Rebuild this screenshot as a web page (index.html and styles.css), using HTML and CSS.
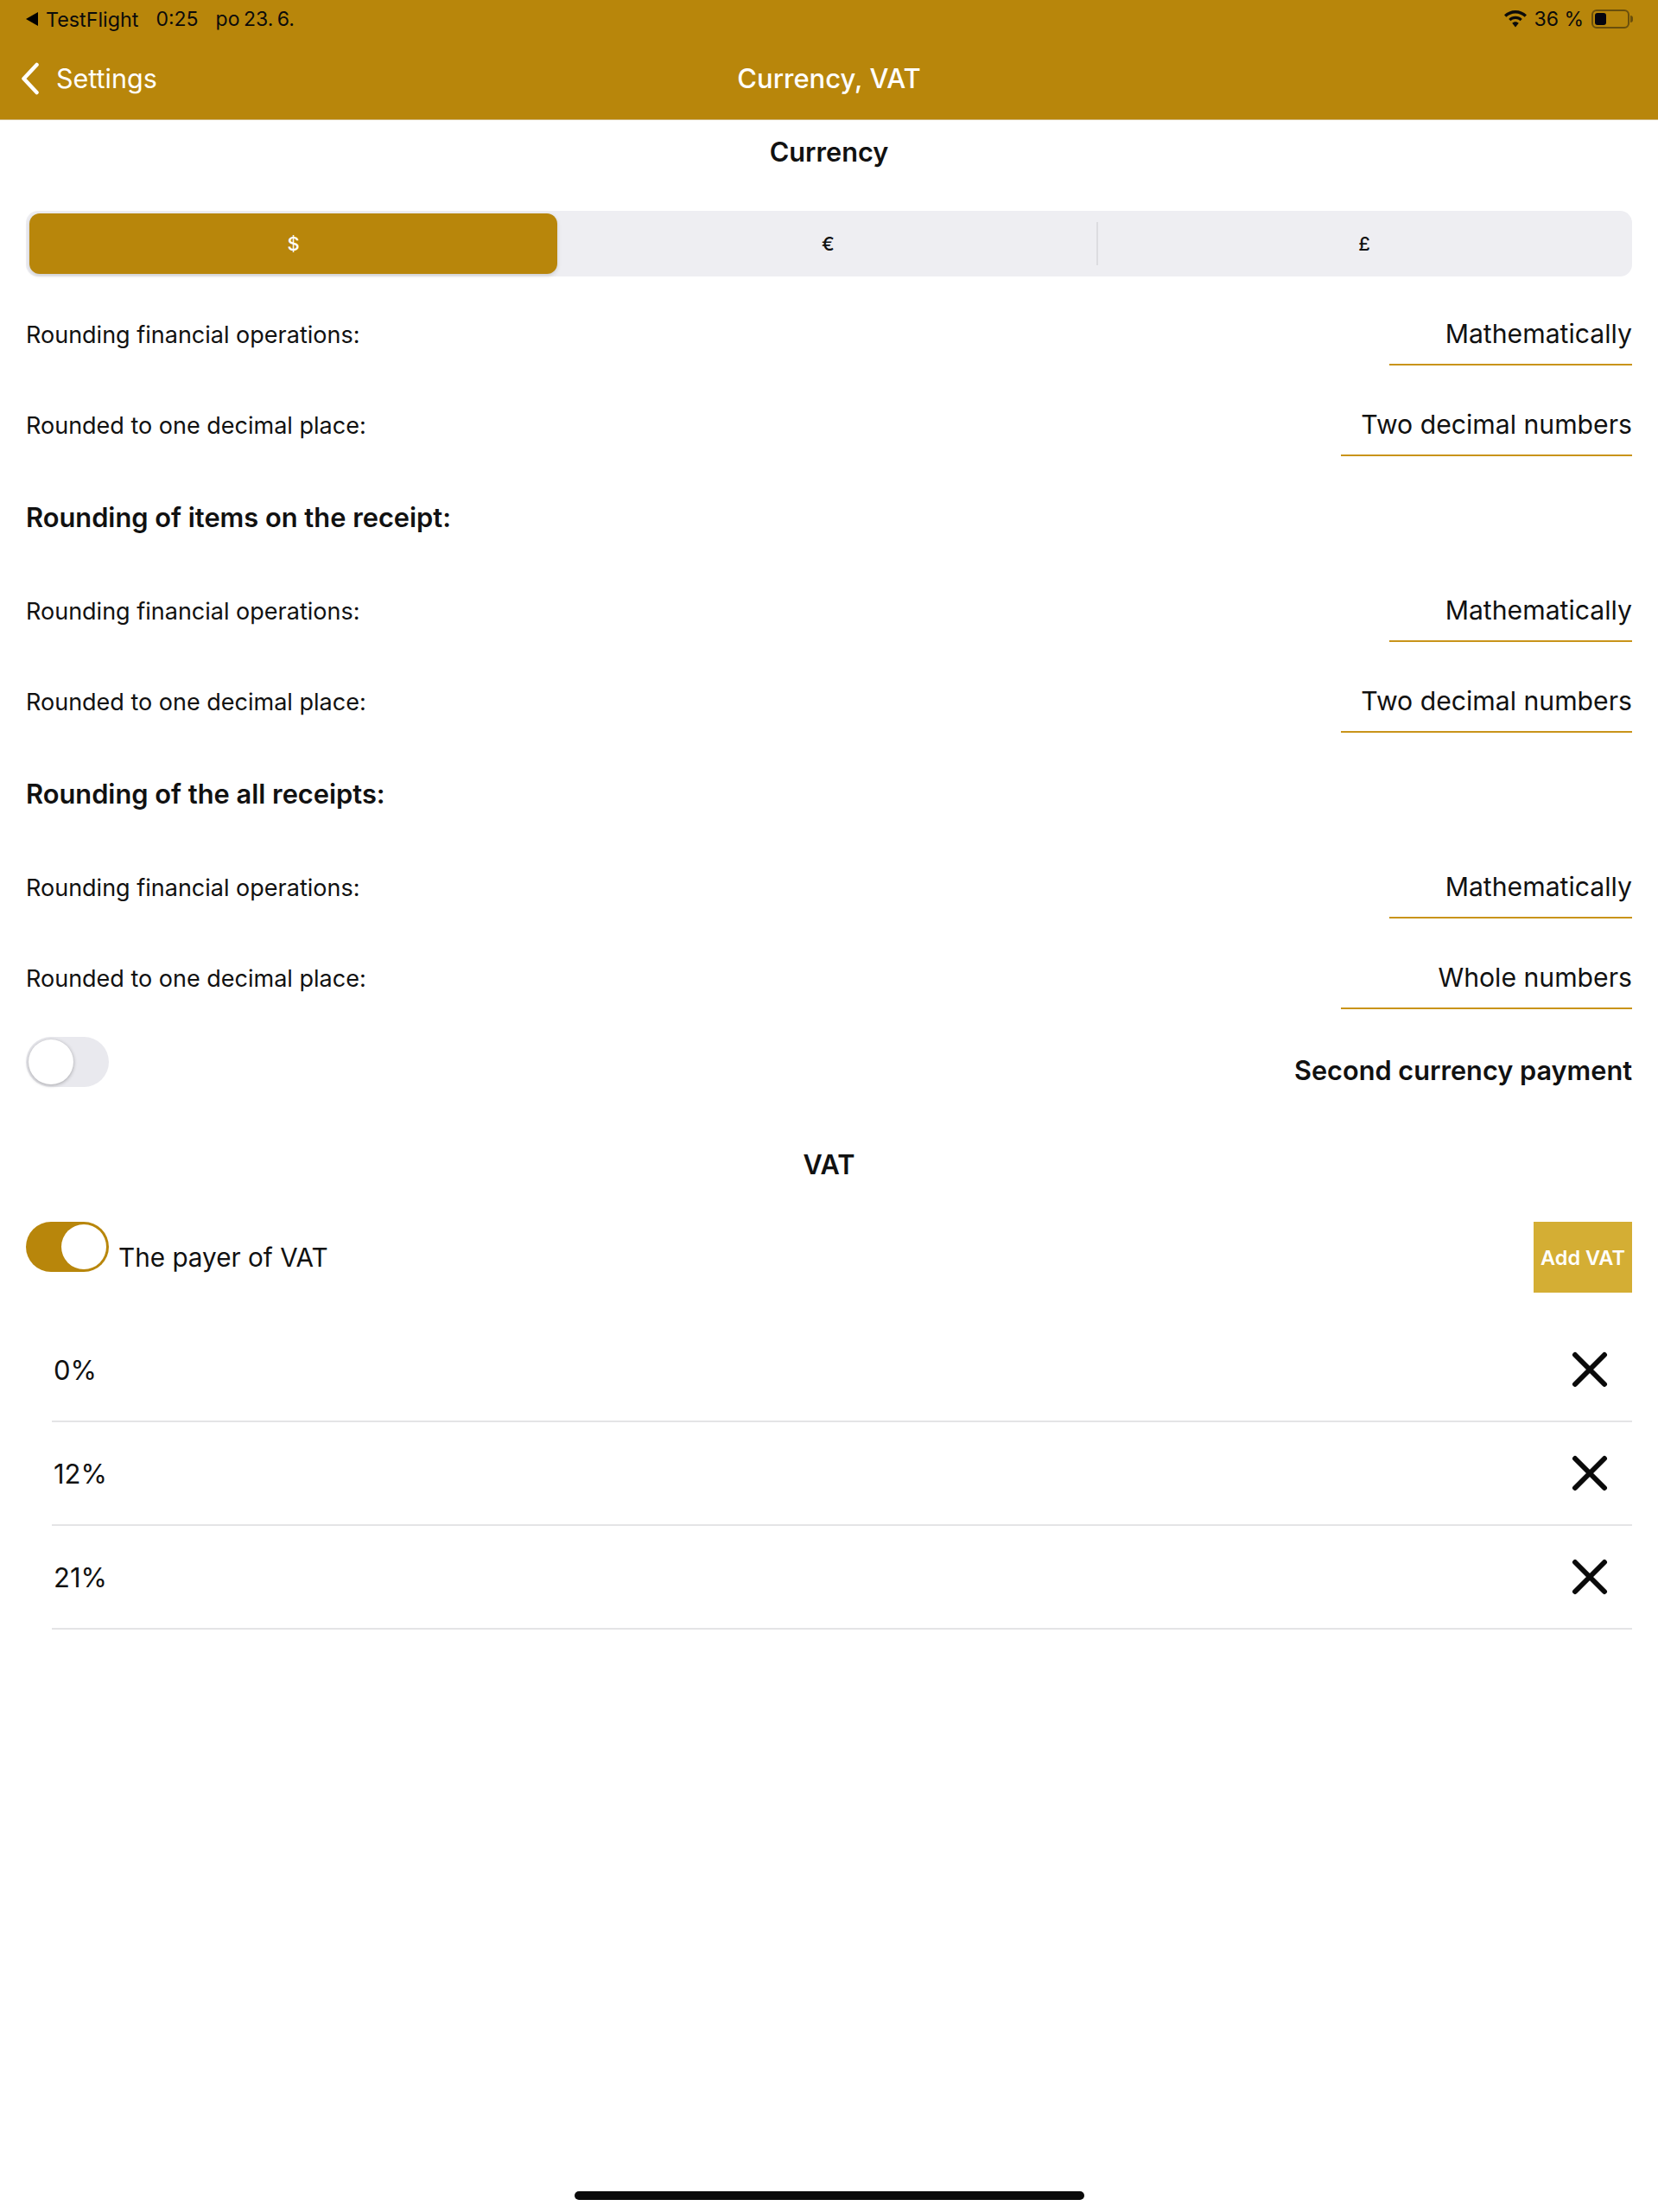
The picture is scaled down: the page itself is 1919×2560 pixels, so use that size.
FILE: index.html
```html
<!DOCTYPE html>
<html lang="en">
<head>
<meta charset="utf-8">
<title>Currency, VAT</title>
<link rel="stylesheet" href="styles.css">
</head>
<body>
<div class="page">
  <header class="appbar">
    <div class="status">
      <div class="status-left">
        <svg class="back-tri" viewBox="0 0 14 16" aria-hidden="true"><path d="M14 0V16L0 8Z"/></svg>
        <span class="st-app">TestFlight</span>
        <span class="st-time">0:25</span>
        <span class="st-date">po 23. 6.</span>
      </div>
      <div class="status-right">
        <svg class="wifi" viewBox="0 0 26 20" aria-hidden="true"><path d="M13 0C8 0 3.500 2 0 5.300l2.300 2.400C5.100 5 8.900 3.400 13 3.400s7.900 1.600 10.700 4.300L26 5.300C22.500 2 18 0 13 0z"/><path d="M13 6.800c-3 0-5.700 1.200-7.800 3.100l2.300 2.400c1.500-1.400 3.400-2.200 5.500-2.200s4 .8 5.500 2.200l2.300-2.400c-2.100-1.900-4.800-3.100-7.800-3.100z"/><path d="M13 13.200c-1.500 0-2.800.6-3.800 1.500L13 19.500l3.800-4.800c-1-.9-2.300-1.500-3.800-1.500z"/></svg>
        <span class="st-batt">36 %</span>
        <div class="battery"><span class="battery-fill"></span></div>
        <span class="battery-cap"></span>
      </div>
    </div>
    <nav class="navbar">
      <a class="nav-back">
        <svg class="chevron" viewBox="0 0 22 38" aria-hidden="true"><path d="M18.500 3 3.500 19l15 16" fill="none" stroke="#fff" stroke-width="4.500" stroke-linecap="round" stroke-linejoin="round"/></svg>
        <span>Settings</span>
      </a>
      <h1 class="nav-title">Currency, VAT</h1>
    </nav>
  </header>

  <main class="content">
    <h2 class="section-title">Currency</h2>
    <div class="segmented">
      <div class="seg seg-on">$</div>
      <div class="seg seg-mid">€</div>
      <div class="seg seg-last">£</div>
    </div>

    <div class="row"><span class="label">Rounding financial operations:</span><span class="field field-s">Mathematically</span></div>
    <div class="row"><span class="label">Rounded to one decimal place:</span><span class="field">Two decimal numbers</span></div>
    <h3 class="sub">Rounding of items on the receipt:</h3>
    <div class="row"><span class="label">Rounding financial operations:</span><span class="field field-s">Mathematically</span></div>
    <div class="row"><span class="label">Rounded to one decimal place:</span><span class="field">Two decimal numbers</span></div>
    <h3 class="sub">Rounding of the all receipts:</h3>
    <div class="row"><span class="label">Rounding financial operations:</span><span class="field field-s">Mathematically</span></div>
    <div class="row"><span class="label">Rounded to one decimal place:</span><span class="field">Whole numbers</span></div>

    <div class="second">
      <div class="toggle"><span class="knob"></span></div>
      <strong class="second-label">Second currency payment</strong>
    </div>

    <h2 class="section-title vat-title">VAT</h2>

    <div class="payer">
      <div class="toggle toggle-on"><span class="knob"></span></div>
      <span class="payer-label">The payer of VAT</span>
      <button class="add">Add VAT</button>
    </div>

    <ul class="vat-list">
      <li class="vat-item"><span>0%</span><svg class="x" viewBox="0 0 42 42" aria-hidden="true"><path d="M4 4l34 34M38 4 4 38"/></svg></li>
      <li class="vat-item"><span>12%</span><svg class="x" viewBox="0 0 42 42" aria-hidden="true"><path d="M4 4l34 34M38 4 4 38"/></svg></li>
      <li class="vat-item"><span>21%</span><svg class="x" viewBox="0 0 42 42" aria-hidden="true"><path d="M4 4l34 34M38 4 4 38"/></svg></li>
    </ul>
  </main>
  <div class="home"></div>
</div>
</body>
</html>
```
FILE: styles.css
```css
* { box-sizing: border-box; }
html, body { margin: 0; padding: 0; background: #fff; }
body { font-family: Inter, "Liberation Sans", sans-serif; color: #111; }
.page { width: 1919px; height: 2560px; display: flex; flex-direction: column; overflow: hidden; }

.appbar { height: 139px; background: #b8860b; border-bottom: 1px solid #d0b880; flex: none; }
.status { height: 44px; display: flex; justify-content: space-between; align-items: center; padding: 0 29px 0 30px; font-size: 23px; color: #0b0b0b; }
.status-left { display: flex; align-items: center; }
.back-tri { width: 14px; height: 16px; fill: #000; margin-right: 9px; }
.st-app { font-size: 23.300px; }
.st-time { margin-left: 20px; margin-right: 20px; }
.st-date { font-size: 23px; word-spacing: -2px; }
.status-right { display: flex; align-items: center; }
.wifi { width: 26px; height: 20px; fill: #0b0b0b; margin-right: 8px; }
.battery { width: 44px; height: 22px; margin-left: 9px; border: 2px solid #6a4f0c; border-radius: 6px; padding: 2px; display: flex; }
.battery-fill { width: 13px; background: #05050f; border-radius: 3px; }
.battery-cap { width: 3px; height: 8px; background: #6a4f0c; border-radius: 0 3px 3px 0; margin-left: 1px; }
.navbar { height: 94px; position: relative; display: flex; align-items: center; justify-content: center; padding-bottom: 1px; color: #fff; }
.nav-back { position: absolute; left: 24px; top: 0; height: 93px; display: flex; align-items: center; gap: 19px; font-size: 30.500px; }
.chevron { width: 22px; height: 38px; }
.nav-title { margin: 0; font-size: 31px; font-weight: 500; }

.content { padding: 0 30px; flex: 1; }
.section-title { margin: 0; height: 74px; line-height: 74px; text-align: center; font-size: 30.700px; font-weight: 600; }
.segmented { margin-top: 31px; height: 76px; background: #eeeef2; border-radius: 14px; display: grid; grid-template-columns: 611px 624px 1fr; padding: 3px 0 3px 4px; font-size: 22px; font-weight: 500; }
.seg { display: flex; align-items: center; justify-content: center; position: relative; border-radius: 12px; }
.seg-on { background: #b8860b; color: #fff; box-shadow: 0 2px 5px rgba(0,0,0,.14); }
.seg-mid { padding-left: 3px; }
.seg-last::before { content: ""; position: absolute; left: 0; top: 10px; bottom: 10px; width: 2px; background: #dcdce0; }

.row { height: 105px; display: flex; justify-content: space-between; align-items: flex-end; padding-bottom: 2px; }
.label { height: 72px; line-height: 73px; font-size: 27px; }
.field { width: 337px; height: 73px; line-height: 73px; font-size: 30.200px; text-align: right; border-bottom: 2px solid #c9941a; }
.field-s { width: 281px; }

.sub { margin: 0; height: 107px; padding-top: 33px; line-height: 72px; font-size: 30.800px; font-weight: 600; }
.sub + .row { height: 108px; }

.second { height: 108px; display: flex; justify-content: space-between; align-items: flex-start; padding-top: 30px; }
.second-label { font-size: 30.700px; font-weight: 600; line-height: 72px; margin-top: 3px; }
.toggle { width: 96px; height: 58px; border-radius: 29px; background: #e9e9ee; position: relative; flex: none; }
.knob { position: absolute; left: 3px; top: 3px; width: 52px; height: 52px; border-radius: 50%; background: #fff; box-shadow: 0 1px 4px rgba(0,0,0,.3); }
.toggle-on { background: #b8860b; }
.toggle-on .knob { left: 41px; box-shadow: none; }

.vat-title { height: 107px; line-height: 107px; padding-top: 16px; }
.payer { height: 82px; display: flex; align-items: flex-start; margin-top: 29px; }
.payer-label { font-size: 29.700px; margin-left: 11px; line-height: 82px; }
.add { margin-left: auto; width: 114px; height: 82px; border: 0; padding: 0; background: #d4ae34; color: #fff; font: 600 23.500px Inter, "Liberation Sans", sans-serif; }

.vat-list { list-style: none; margin: 30px 0 0 30px; padding: 0; }
.vat-item { height: 120px; border-bottom: 2px solid #e4e4e6; display: flex; justify-content: space-between; align-items: center; font-size: 31px; padding: 0 28px 0 2px; }
.x { width: 42px; height: 42px; fill: none; stroke: #0a0a0a; stroke-width: 6; stroke-linecap: round; }

.home { flex: none; width: 590px; height: 10px; border-radius: 5px; background: #0a0a0a; margin: 0 auto 14px; }
```
